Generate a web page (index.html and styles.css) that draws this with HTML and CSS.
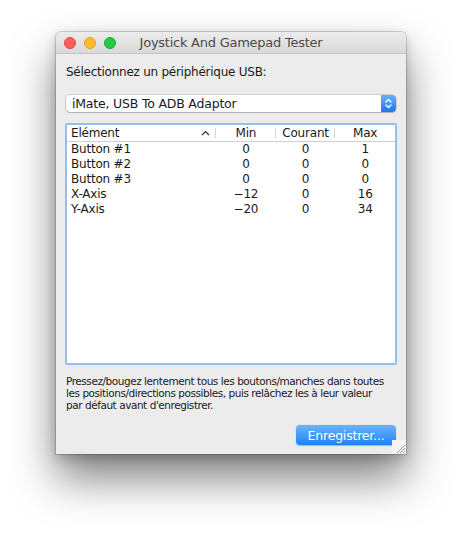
FILE: index.html
```html
<!DOCTYPE html>
<html>
<head>
<meta charset="utf-8">
<link rel="stylesheet" href="styles.css">
</head>
<body>
<div class="stage">
  <div class="window">
    <div class="titlebar">
      <div class="lights">
        <span class="light red"></span>
        <span class="light yellow"></span>
        <span class="light green"></span>
      </div>
      <div class="title">Joystick And Gamepad Tester</div>
    </div>
    <div class="content">
      <div class="label">Sélectionnez un périphérique USB:</div>
      <div class="popup">
        <span class="popup-text">iMate, USB To ADB Adaptor</span>
        <span class="popup-arrows">
          <svg width="15" height="17" viewBox="0 0 15 17">
            <path d="M5 7 L7.5 4.5 L10 7" fill="none" stroke="#fff" stroke-width="1.4" stroke-linecap="round" stroke-linejoin="round"/>
            <path d="M5 10 L7.5 12.5 L10 10" fill="none" stroke="#fff" stroke-width="1.4" stroke-linecap="round" stroke-linejoin="round"/>
          </svg>
        </span>
      </div>
      <div class="table">
        <div class="thead">
          <div class="th c-name">Elément<span class="sort"><svg width="9" height="6" viewBox="0 0 9 6"><path d="M1 5 L4.5 1.5 L8 5" fill="none" stroke="#333" stroke-width="1.2"/></svg></span></div>
          <div class="th c-num">Min</div>
          <div class="th c-num">Courant</div>
          <div class="th c-num last">Max</div>
        </div>
        <div class="tbody">
          <div class="tr"><div class="td c-name">Button #1</div><div class="td c-num">0</div><div class="td c-num">0</div><div class="td c-num">1</div></div>
          <div class="tr"><div class="td c-name">Button #2</div><div class="td c-num">0</div><div class="td c-num">0</div><div class="td c-num">0</div></div>
          <div class="tr"><div class="td c-name">Button #3</div><div class="td c-num">0</div><div class="td c-num">0</div><div class="td c-num">0</div></div>
          <div class="tr"><div class="td c-name">X-Axis</div><div class="td c-num">−12</div><div class="td c-num">0</div><div class="td c-num">16</div></div>
          <div class="tr"><div class="td c-name">Y-Axis</div><div class="td c-num">−20</div><div class="td c-num">0</div><div class="td c-num">34</div></div>
        </div>
      </div>
      <p class="help">Pressez/bougez lentement tous les boutons/manches dans toutes les positions/directions possibles, puis relâchez les à leur valeur par défaut avant d'enregistrer.</p>
      <div class="actions">
        <button class="btn">Enregistrer...</button>
      </div>
    </div>
    <div class="grip">
      <svg width="12" height="12" viewBox="0 0 12 12">
        <path d="M11 3 L3 11 M11 6 L6 11 M11 9 L9 11" stroke="#9a9a9a" stroke-width="1"/>
      </svg>
    </div>
  </div>
</div>
</body>
</html>
```

FILE: styles.css
```css
html, body {
  margin: 0;
  padding: 0;
  background: #ffffff;
}
body {
  font-family: "DejaVu Sans", "Liberation Sans", sans-serif;
  color: #1a1a1a;
  min-height: 534px;
}
.stage {
  padding: 32px 0 80px 56px;
}
.window {
  position: relative;
  width: 350px;
  height: 422px;
  background: #ececec;
  border-radius: 5px 5px 0 0;
  box-shadow: 0 0 0 1px rgba(0,0,0,0.16), 0 24px 44px rgba(0,0,0,0.5), 0 4px 12px rgba(0,0,0,0.2);
  display: flex;
  flex-direction: column;
  overflow: hidden;
}
.titlebar {
  height: 22px;
  flex: none;
  background: linear-gradient(#ececec, #d9d9d9);
  border-bottom: 1px solid #c6c6c6;
  box-sizing: border-box;
  position: relative;
  display: flex;
  align-items: center;
  justify-content: center;
}
.lights {
  position: absolute;
  left: 8px;
  top: 5px;
  display: flex;
  gap: 8px;
}
.light {
  width: 12px;
  height: 12px;
  border-radius: 50%;
  box-sizing: border-box;
}
.red { background: #fc5f57; border: 1px solid #e0443e; }
.yellow { background: #fdbc2e; border: 1px solid #dea123; }
.green { background: #28c840; border: 1px solid #1aab29; }
.title {
  font-size: 13px;
  color: #4a4a4a;
  letter-spacing: -0.25px;
}
.content {
  flex: 1;
  display: flex;
  flex-direction: column;
  padding: 10px 9px 0 9px;
}
.label {
  font-size: 12px;
  padding-left: 1px;
  height: 16px;
  line-height: 16px;
  letter-spacing: -0.25px;
}
.popup {
  margin: 15px 1px 0 1px;
  height: 17px;
  box-sizing: border-box;
  background: #fff;
  border-radius: 4px;
  box-shadow: 0 0 0 0.5px rgba(0,0,0,0.25), 0 1px 1px rgba(0,0,0,0.15);
  display: flex;
  align-items: center;
  overflow: hidden;
}
.popup-text {
  flex: 1;
  font-size: 12.5px;
  padding-left: 6px;
  letter-spacing: -0.2px;
}
.popup-arrows {
  width: 15px;
  height: 17px;
  background: linear-gradient(#69aefc, #1d78f7);
  display: flex;
}
.table {
  margin-top: 11px;
  height: 242px;
  box-sizing: border-box;
  border: 2px solid #94bdf0;
  border-radius: 2px;
  background: #fff;
  display: flex;
  flex-direction: column;
}
.thead {
  display: flex;
  height: 16px;
  border-bottom: 1px solid #d0d0d0;
  font-size: 12px;
  letter-spacing: -0.2px;
}
.th {
  position: relative;
  line-height: 16px;
}
.th::after {
  content: "";
  position: absolute;
  right: 0;
  top: 3px;
  bottom: 3px;
  width: 1px;
  background: #d8d8d8;
}
.th.last::after { display: none; }
.c-name {
  width: 150px;
  padding-left: 4px;
  box-sizing: border-box;
  display: flex;
  align-items: center;
}
.c-num {
  width: 60px;
  text-align: center;
}
.sort {
  margin-left: auto;
  margin-right: 6px;
  display: flex;
}
.tbody {
  font-size: 12px;
  letter-spacing: -0.2px;
}
.tr {
  display: flex;
  height: 15px;
  line-height: 15px;
}
.help {
  margin: 10px 1px 0 1px;
  width: 322px;
  font-size: 10.5px;
  line-height: 12px;
  letter-spacing: -0.45px;
  color: #1a1a1a;
}
.actions {
  display: flex;
  justify-content: flex-end;
  margin-top: 14px;
  padding-right: 1px;
}
.btn {
  width: 100px;
  height: 20px;
  border: none;
  border-radius: 4px;
  background: linear-gradient(#6cb4fb, #1d82fb);
  box-shadow: 0 0.5px 1px rgba(0,0,0,0.25);
  color: #fff;
  font-family: "DejaVu Sans", sans-serif;
  font-size: 12.5px;
  letter-spacing: -0.2px;
  padding: 0;
}
.grip {
  position: absolute;
  right: 0;
  bottom: 0;
  width: 14px;
  height: 14px;
  background: #f4f4f4;
  display: flex;
  align-items: flex-end;
  justify-content: flex-end;
}
```
